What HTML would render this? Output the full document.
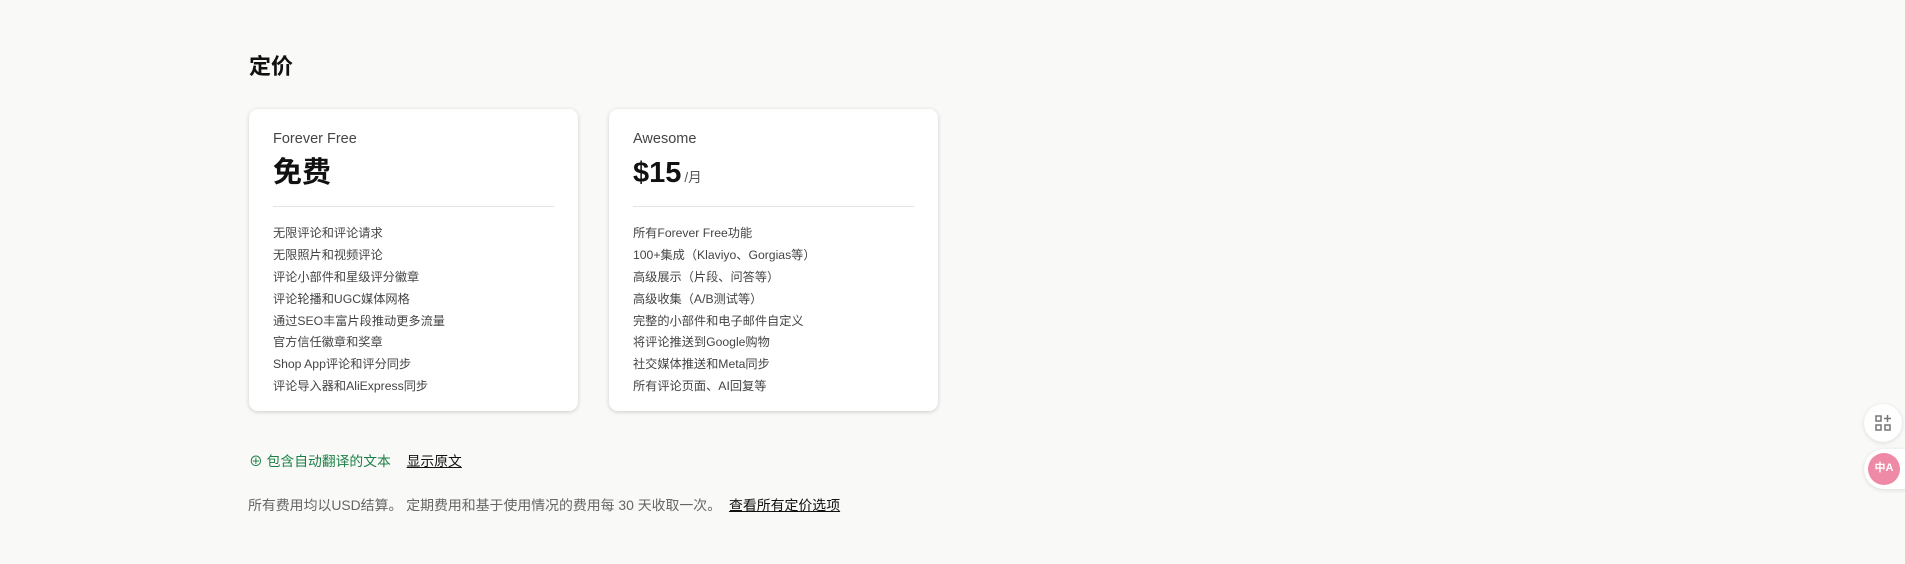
<!DOCTYPE html>
<html><head><meta charset="utf-8"><style>
*{margin:0;padding:0;box-sizing:border-box}
body{width:1905px;height:564px;background:#f9f9f8;font-family:"Liberation Sans","Noto Sans CJK SC",sans-serif;position:relative;overflow:hidden;color:#111}
h1{position:absolute;left:249px;top:49px;font-size:22px;font-weight:700}
.card{position:absolute;top:109px;width:329px;height:302px;background:#fff;border-radius:9px;box-shadow:0 1px 4px rgba(0,0,0,.18);padding:0 24px}
.card .nm{margin-top:22px;font-size:14.5px;color:#444;height:18px}
.card .pr{margin-top:5px;font-size:29px;font-weight:700;height:38px;line-height:38px}
.card .pr span{font-size:13.5px;font-weight:400;color:#555;margin-left:3px}
.card hr{border:0;border-top:1px solid #e4e4e4;margin-top:14px}
.card ul{list-style:none;margin-top:16px}
.card li{font-size:12.2px;color:#444;height:21.9px;line-height:21.9px}
.tr{position:absolute;left:249px;top:450px;font-size:13.8px;color:#1a7f45}
.tr a{color:#111;text-decoration:underline;margin-left:12px}
.ft{position:absolute;left:248px;top:495px;font-size:13.9px;color:#666}
.ft a{color:#111;text-decoration:underline;margin-left:4px}
.fb{position:absolute;width:38px;height:38px;border-radius:50%;background:#fff;box-shadow:0 1px 5px rgba(0,0,0,.12)}
</style></head><body>
<h1>定价</h1>
<div class="card" style="left:249px">
<div class="nm">Forever Free</div>
<div class="pr">免费</div>
<hr>
<ul><li>无限评论和评论请求</li><li>无限照片和视频评论</li><li>评论小部件和星级评分徽章</li><li>评论轮播和UGC媒体网格</li><li>通过SEO丰富片段推动更多流量</li><li>官方信任徽章和奖章</li><li>Shop App评论和评分同步</li><li>评论导入器和AliExpress同步</li></ul>
</div>
<div class="card" style="left:609px">
<div class="nm">Awesome</div>
<div class="pr">$15<span>/月</span></div>
<hr>
<ul><li>所有Forever Free功能</li><li>100+集成（Klaviyo、Gorgias等）</li><li>高级展示（片段、问答等）</li><li>高级收集（A/B测试等）</li><li>完整的小部件和电子邮件自定义</li><li>将评论推送到Google购物</li><li>社交媒体推送和Meta同步</li><li>所有评论页面、AI回复等</li></ul>
</div>
<div class="tr">⊕ 包含自动翻译的文本 <a>显示原文</a></div>
<div class="ft">所有费用均以USD结算。 定期费用和基于使用情况的费用每 30 天收取一次。 <a>查看所有定价选项</a></div>
<div class="fb" style="left:1864px;top:404px"><svg width="38" height="38" viewBox="0 0 38 38" fill="none" stroke="#777" stroke-width="1.5"><rect x="12" y="12" width="5" height="5"/><rect x="12" y="21" width="5" height="5"/><rect x="21" y="21" width="5" height="5"/><path d="M23.5 11v7M20 14.5h7"/></svg></div>
<div style="position:absolute;left:1864px;top:449px;width:60px;height:40px;border-radius:20px;background:#fff;box-shadow:0 1px 5px rgba(0,0,0,.12)"></div>
<div style="position:absolute;left:1868px;top:453px;width:32px;height:32px;border-radius:50%;background:#ef8aa6;color:#fff;font-size:11px;font-weight:700;text-align:center;line-height:30px">中A</div>
</body></html>
